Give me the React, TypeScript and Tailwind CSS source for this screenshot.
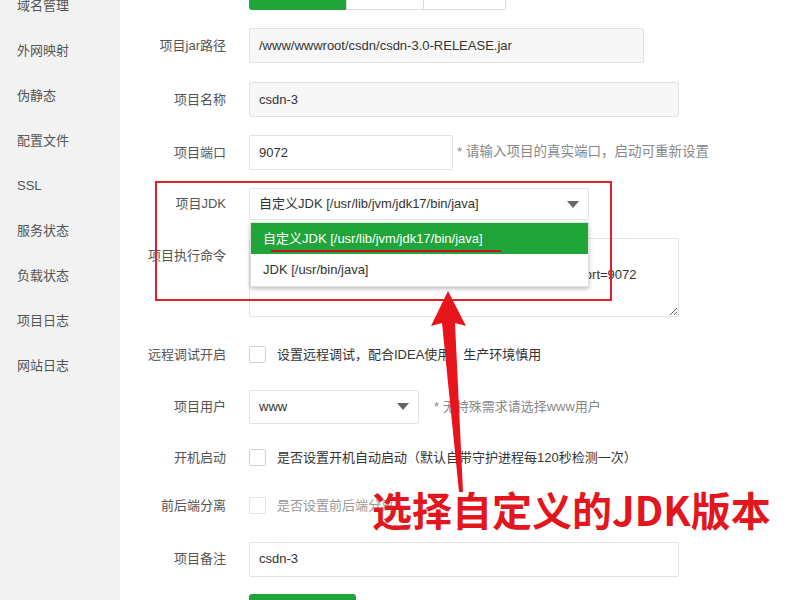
import React from "react";

const font = { fontFamily: '"Liberation Sans", "Noto Sans CJK SC", sans-serif' };

const sideItems = [
  "域名管理",
  "外网映射",
  "伪静态",
  "配置文件",
  "SSL",
  "服务状态",
  "负载状态",
  "项目日志",
  "网站日志",
];

function Label({ children }: { children: React.ReactNode }) {
  return <div className="w-[106px] shrink-0 text-right text-[13px] text-[#555]">{children}</div>;
}

function Caret() {
  return (
    <svg width="12" height="7" viewBox="0 0 12 7" className="shrink-0">
      <path d="M0 0 L12 0 L6 7 Z" fill="#666" />
    </svg>
  );
}

function Checkbox({ light }: { light?: boolean }) {
  return (
    <span
      className={
        "inline-block w-[17px] h-[17px] rounded-[2px] border bg-white shrink-0 " +
        (light ? "border-[#e4e4e4]" : "border-[#d4d4d4]")
      }
    />
  );
}

export default function App() {
  return (
    <div className="relative w-[800px] h-[600px] overflow-hidden bg-white flex" style={font}>
      {/* sidebar */}
      <div className="w-[120px] shrink-0 bg-[#f2f2f2]">
        <div className="-mt-[17px] flex flex-col">
          {sideItems.map((s) => (
            <div key={s} className="h-[45px] flex items-center pl-[17px] text-[13px] text-[#555]">
              {s}
            </div>
          ))}
        </div>
      </div>

      {/* form */}
      <div className="flex-1 flex flex-col text-[13px] text-[#333]">
        <div className="-mt-[25px] flex items-center h-[35px]">
          <Label>项目类型</Label>
          <div className="ml-[23px] flex h-[35px]">
            <div className="w-[97px] rounded-l-[3px] bg-[#20a53a] text-white flex items-center justify-center">
              Spring_boot
            </div>
            <div className="w-[78px] border border-[#ddd] bg-white flex items-center justify-center">Tomcat</div>
            <div className="w-[82px] border border-l-0 border-[#ddd] rounded-r-[3px] bg-white flex items-center justify-center">
              独立项目
            </div>
          </div>
        </div>

        <div className="mt-[18px] flex items-center">
          <Label>项目jar路径</Label>
          <div className="ml-[23px] w-[395px] h-[35px] border border-[#e3e3e3] rounded-[2px] bg-[#f7f7f7] flex items-center px-[9px]">
            /www/wwwroot/csdn/csdn-3.0-RELEASE.jar
          </div>
        </div>

        <div className="mt-[19px] flex items-center">
          <Label>项目名称</Label>
          <div className="ml-[23px] w-[430px] h-[35px] border border-[#e3e3e3] rounded-[2px] bg-[#f7f7f7] flex items-center px-[9px]">
            csdn-3
          </div>
        </div>

        <div className="mt-[18px] flex items-center">
          <Label>项目端口</Label>
          <div className="ml-[23px] w-[204px] h-[35px] border border-[#e3e3e3] rounded-[2px] bg-white flex items-center px-[9px]">
            9072
          </div>
          <div className="ml-[4px] text-[13.5px] text-[#888]">* 请输入项目的真实端口，启动可重新设置</div>
        </div>

        <div className="mt-[18px] flex items-center">
          <Label>项目JDK</Label>
          <div className="ml-[23px] relative w-[340px] h-[32px] border border-[#e3e3e3] rounded-[2px] bg-white flex items-center justify-between pl-[9px] pr-[9px]">
            <span>自定义JDK [/usr/lib/jvm/jdk17/bin/java]</span>
            <Caret />
            <div className="absolute left-0 top-[33px] w-[339px] bg-white shadow-[0_2px_4px_rgba(0,0,0,0.25)] border border-[#e0e0e0] z-10">
              <div className="relative h-[31px] bg-[#20a53a] text-white flex items-center px-[12px]">
                自定义JDK [/usr/lib/jvm/jdk17/bin/java]
                <div className="absolute left-[20px] top-[27px] w-[230px] h-[2px] bg-[#c8141a]" />
              </div>
              <div className="h-[32px] flex items-center px-[12px]">JDK [/usr/bin/java]</div>
            </div>
          </div>
        </div>

        <div className="mt-[18px] flex items-start">
          <div className="mt-[8px]">
            <Label>项目执行命令</Label>
          </div>
          <textarea
            readOnly
            className="ml-[23px] w-[430px] h-[79px] border border-[#e3e3e3] rounded-[2px] bg-white px-[9px] pt-[6px] leading-[20px] text-[13px] text-[#333] outline-none"
            style={font}
            value={"nohup /usr/lib/jvm/jdk17/bin/java -jar -Xmx1024M\n/www/wwwroot/csdn/csdn-3.0-RELEASE.jar     --server.port=9072"}
          />
        </div>

        <div className="mt-[28px] flex items-center h-[20px]">
          <Label>远程调试开启</Label>
          <div className="ml-[23px] flex items-center gap-[11px]">
            <Checkbox />
            <span>设置远程调试，配合IDEA使用，生产环境慎用</span>
          </div>
        </div>

        <div className="mt-[25px] flex items-center">
          <Label>项目用户</Label>
          <div className="ml-[23px] w-[170px] h-[34px] border border-[#e3e3e3] rounded-[2px] bg-white flex items-center justify-between px-[9px]">
            <span>www</span>
            <Caret />
          </div>
          <div className="ml-[15px] text-[13px] text-[#888]">* 无特殊需求请选择www用户</div>
        </div>

        <div className="mt-[24px] flex items-center h-[20px]">
          <Label>开机启动</Label>
          <div className="ml-[23px] flex items-center gap-[11px]">
            <Checkbox />
            <span>是否设置开机自动启动（默认自带守护进程每120秒检测一次）</span>
          </div>
        </div>

        <div className="mt-[29px] flex items-center h-[20px]">
          <Label>前后端分离</Label>
          <div className="ml-[23px] flex items-center gap-[11px]">
            <Checkbox light />
            <span className="text-[#999]">是否设置前后端分离</span>
          </div>
        </div>

        <div className="mt-[26px] flex items-center">
          <Label>项目备注</Label>
          <div className="ml-[23px] w-[430px] h-[35px] border border-[#e3e3e3] rounded-[2px] bg-white flex items-center px-[9px]">
            csdn-3
          </div>
        </div>

        <div className="mt-[17px] flex">
          <div className="ml-[129px] w-[107px] h-[35px] rounded-[3px] bg-[#20a53a]" />
        </div>
      </div>

      {/* annotations */}
      <div className="absolute left-[155px] top-[181px] w-[457px] h-[120px] border-[2.5px] border-[#e02027] z-20 pointer-events-none" />
      <svg className="absolute left-0 top-0 z-20 pointer-events-none" width="800" height="600">
        <path
          d="M448 291 L466 326 L455 323 L463 492 L459 492 L442 323 L431 326 Z"
          fill="#e8141c"
        />
      </svg>
      <div
        className="absolute left-[372px] top-[489px] z-20 text-[40px] font-bold leading-none text-[#e3161d] whitespace-nowrap"
        style={{ fontFamily: '"Noto Sans CJK SC", "Liberation Sans", sans-serif' }}
      >
        选择自定义的JDK版本
      </div>
    </div>
  );
}
